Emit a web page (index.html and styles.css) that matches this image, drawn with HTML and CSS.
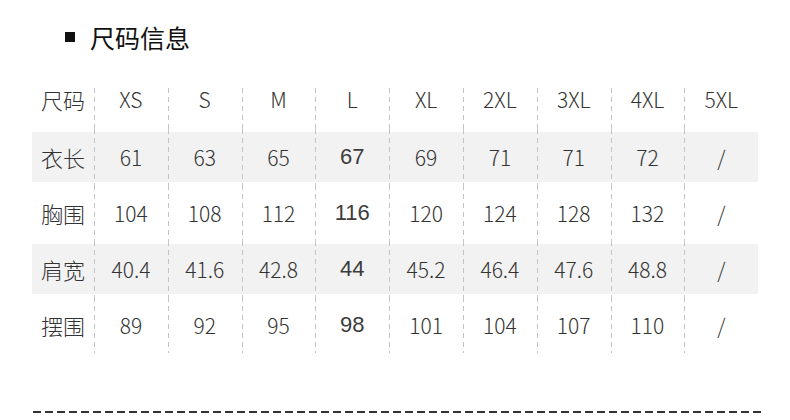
FILE: index.html
```html
<!DOCTYPE html>
<html lang="zh">
<head>
<meta charset="utf-8">
<link rel="stylesheet" href="styles.css">
</head>
<body>
<div class="page">
  <h2 class="title"><span class="bullet"></span>尺码信息</h2>
  <div class="table">
    <div class="cell head label">尺码</div>
    <div class="cell head sep">XS</div>
    <div class="cell head sep">S</div>
    <div class="cell head sep">M</div>
    <div class="cell head sep">L</div>
    <div class="cell head sep">XL</div>
    <div class="cell head sep">2XL</div>
    <div class="cell head sep">3XL</div>
    <div class="cell head sep">4XL</div>
    <div class="cell head sep">5XL</div>

    <div class="cell gray label">衣长</div>
    <div class="cell gray sep">61</div>
    <div class="cell gray sep">63</div>
    <div class="cell gray sep">65</div>
    <div class="cell gray sep alt">67</div>
    <div class="cell gray sep">69</div>
    <div class="cell gray sep">71</div>
    <div class="cell gray sep">71</div>
    <div class="cell gray sep">72</div>
    <div class="cell gray sep">/</div>

    <div class="cell label">胸围</div>
    <div class="cell sep">104</div>
    <div class="cell sep">108</div>
    <div class="cell sep">112</div>
    <div class="cell sep alt">116</div>
    <div class="cell sep">120</div>
    <div class="cell sep">124</div>
    <div class="cell sep">128</div>
    <div class="cell sep">132</div>
    <div class="cell sep">/</div>

    <div class="cell gray label">肩宽</div>
    <div class="cell gray sep">40.4</div>
    <div class="cell gray sep">41.6</div>
    <div class="cell gray sep">42.8</div>
    <div class="cell gray sep alt">44</div>
    <div class="cell gray sep">45.2</div>
    <div class="cell gray sep">46.4</div>
    <div class="cell gray sep">47.6</div>
    <div class="cell gray sep">48.8</div>
    <div class="cell gray sep">/</div>

    <div class="cell label">摆围</div>
    <div class="cell sep">89</div>
    <div class="cell sep">92</div>
    <div class="cell sep">95</div>
    <div class="cell sep alt">98</div>
    <div class="cell sep">101</div>
    <div class="cell sep">104</div>
    <div class="cell sep">107</div>
    <div class="cell sep">110</div>
    <div class="cell sep">/</div>
  </div>
  <div class="bottom-line"></div>
</div>
</body>
</html>
```
FILE: styles.css
```css
html, body {
  margin: 0;
  padding: 0;
  background: #fff;
}
body {
  width: 790px;
  height: 420px;
  overflow: hidden;
  font-family: "Noto Sans CJK SC", "Noto Sans", sans-serif;
  color: #333;
}
.page {
  padding: 22px 30px 0 32px;
}
.title {
  margin: 0;
  padding-left: 33px;
  display: flex;
  align-items: center;
  gap: 15px;
  font-size: 25px;
  font-weight: 400;
  line-height: 30px;
  color: #111;
}
.bullet {
  width: 10px;
  height: 10px;
  background: #111;
}
.table {
  margin-top: 21px;
  display: grid;
  grid-template-columns: 62px repeat(9, 73.8px);
  grid-template-rows: 56px repeat(4, 56px);
}
.cell {
  display: flex;
  align-items: center;
  justify-content: center;
  font-size: 21px;
  font-weight: 300;
  color: #333;
}
.head {
  align-self: end;
  height: 41px;
  align-items: flex-start;
  line-height: 22px;
}
.label {
  font-size: 22px;
}
.sep {
  background: repeating-linear-gradient(to bottom, #c4c4c4 0 5px, transparent 5px 9px) left top / 1px 100% no-repeat;
}
.gray {
  background: linear-gradient(#f2f2f2, #f2f2f2) left 3px / 100% 50px no-repeat;
}
.gray.sep {
  background:
    repeating-linear-gradient(to bottom, #c4c4c4 0 5px, transparent 5px 9px) left top / 1px 100% no-repeat,
    linear-gradient(#f2f2f2, #f2f2f2) left 3px / 100% 50px no-repeat;
}
.alt {
  font-family: "Liberation Sans", sans-serif;
  font-size: 22px;
  font-weight: 400;
  color: #3c3c3c;
}
.bottom-line {
  margin-top: 58px;
  margin-left: 1px;
  width: 728px;
  height: 2px;
  background: repeating-linear-gradient(to right, #333 0 8px, transparent 8px 12px);
}
```
